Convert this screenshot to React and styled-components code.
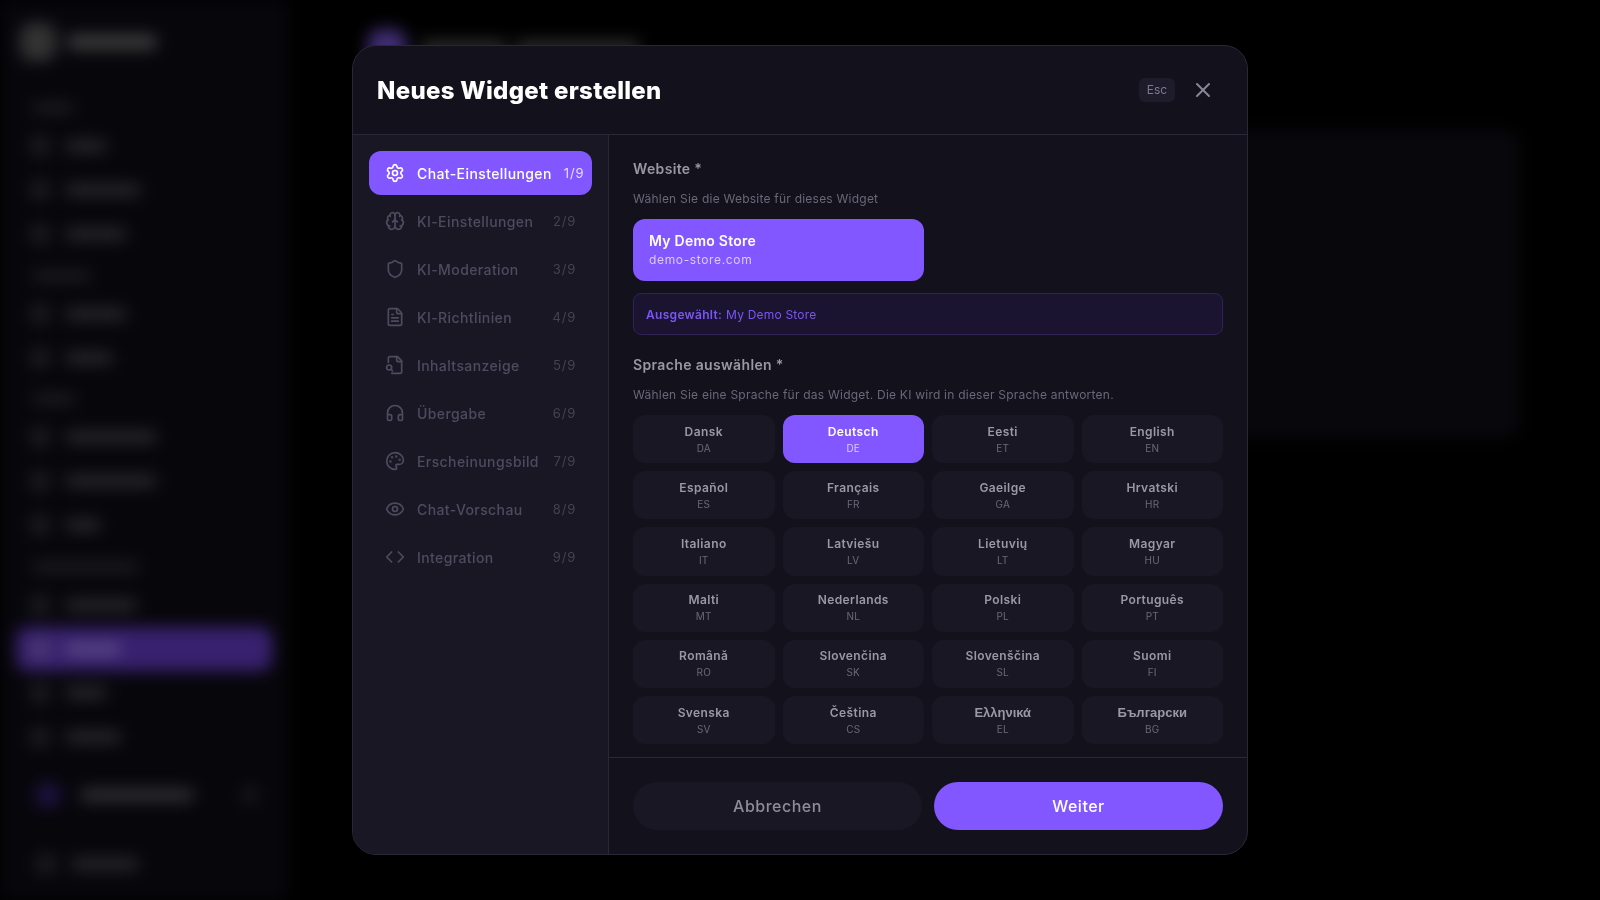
import { Settings, Brain, Shield, FileText, Headphones, Palette, Eye, Code, X } from "lucide-react";
import styled, { createGlobalStyle } from "styled-components";

const GlobalStyle = createGlobalStyle`
  * {
    box-sizing: border-box;
  }
  html,
  body {
    margin: 0;
    height: 100%;
    background: #000;
    font-family: "Inter", "Noto Sans", sans-serif;
    overflow: hidden;
  }
`;

/* blurred page behind the dialog */
const Backdrop = styled.div`
  display: flex;
  height: 100vh;
  background: #000;
  filter: blur(8px);
`;

const SideBar = styled.aside`
  width: 288px;
  flex-shrink: 0;
  padding: 22px 16px;
  background: #07060b;
`;

const Logo = styled.div`
  display: flex;
  align-items: center;
  gap: 12px;
  height: 40px;
  margin: 0 0 41px 4px;
`;

const LogoMark = styled.div`
  width: 36px;
  height: 38px;
  border-radius: 12px;
  background: #333;
`;

const LogoText = styled.div`
  width: 88px;
  height: 14px;
  background: #404040;
`;

const Group = styled.div`
  margin-bottom: 14.5px;
`;

const GroupLabel = styled.div`
  width: ${(p) => p.$w}px;
  height: 10px;
  margin: 2px 0 11px 17px;
  background: #1f1f22;
`;

const SideRow = styled.div`
  display: flex;
  align-items: center;
  gap: 16px;
  height: 44px;
  padding-left: 14px;
  border-radius: 12px;
  background: ${(p) => (p.$active ? "#38216f" : "transparent")};
`;

const SideIcon = styled.div`
  width: 20px;
  height: 20px;
  border-radius: 6px;
  background: ${(p) => (p.$active ? "#4a3a72" : "#1c1c1f")};
`;

const SideText = styled.div`
  width: ${(p) => p.$w}px;
  height: 12px;
  background: ${(p) => (p.$active ? "#5a4a85" : "#29292c")};
`;

const Profile = styled.div`
  display: flex;
  align-items: center;
  height: 44px;
  margin-top: 14px;
  padding-left: 19px;
`;

const Avatar = styled.div`
  width: 26px;
  height: 26px;
  border-radius: 50%;
  background: #1d1240;
`;

const ProfileText = styled.div`
  width: 112px;
  height: 12px;
  margin-left: 20px;
  background: #333336;
`;

const ProfileChevron = styled.div`
  width: 14px;
  height: 14px;
  margin-left: 50px;
  background: #1c1c1f;
`;

const LogoutRow = styled(SideRow)`
  margin-top: 25px;
  padding-left: 20px;
`;

const PageArea = styled.main`
  flex: 1;
  padding: 36px 80px 0 80px;
`;

const PageHead = styled.div`
  display: flex;
  align-items: center;
  height: 24px;
  margin-bottom: 70px;
`;

const PageIcon = styled.div`
  width: 38px;
  height: 38px;
  margin-right: 15px;
  border-radius: 12px;
  background: #3f2d72;
`;

const PageTitle = styled.div`
  width: ${(p) => p.$w}px;
  height: 14px;
  margin-right: 10px;
  background: #303030;
`;

const PageCard = styled.div`
  height: 308px;
  border-radius: 16px;
  background: #08080c;
`;

/* dialog */
const Overlay = styled.div`
  position: fixed;
  inset: 0;
  display: flex;
  align-items: center;
  justify-content: center;
`;

const Dialog = styled.div`
  display: flex;
  flex-direction: column;
  width: 896px;
  height: 90vh;
  overflow: hidden;
  background: #13111c;
  border: 1px solid #2a2738;
  border-radius: 24px;
`;

const Header = styled.header`
  display: flex;
  align-items: center;
  justify-content: space-between;
  flex-shrink: 0;
  height: 89px;
  padding: 0 24px;
  border-bottom: 1px solid #2a2738;
`;

const Title = styled.h2`
  margin: 0;
  font-size: 24px;
  font-weight: 800;
  letter-spacing: 0.3px;
  color: #fff;
`;

const HeaderActions = styled.div`
  display: flex;
  align-items: center;
  gap: 8px;
`;

const EscKey = styled.kbd`
  width: 36px;
  height: 24px;
  font-family: inherit;
  font-size: 12px;
  line-height: 24px;
  text-align: center;
  color: #7e7a8c;
  background: #1e1b2b;
  border-radius: 6px;
`;

const CloseButton = styled.button`
  display: flex;
  padding: 8px;
  border: 0;
  color: #8a8698;
  background: none;
`;

const Body = styled.div`
  display: flex;
  flex: 1;
  min-height: 0;
`;

const Steps = styled.nav`
  display: flex;
  flex-direction: column;
  gap: 4px;
  flex-shrink: 0;
  width: 256px;
  padding: 16px;
  background: #1a1725;
  border-right: 1px solid #2a2738;
`;

const Step = styled.div`
  display: flex;
  align-items: center;
  gap: 12px;
  height: 44px;
  padding: 0 16px;
  font-size: 14px;
  font-weight: 500;
  letter-spacing: 0.4px;
  white-space: nowrap;
  color: ${(p) => (p.$active ? "#fff" : "#4f4b5e")};
  background: ${(p) => (p.$active ? "#8257ff" : "transparent")};
  border-radius: 12px;

  svg {
    flex-shrink: 0;
  }
`;

const StepLabel = styled.span`
  flex: 1 0 auto;
`;

const StepCount = styled.span`
  flex-shrink: 0;
  font-size: 13px;
  font-weight: 400;
  letter-spacing: 0.8px;
  opacity: 0.8;
`;

const Main = styled.div`
  display: flex;
  flex-direction: column;
  flex: 1;
  min-width: 0;
`;

const Scroll = styled.div`
  flex: 1;
  min-height: 0;
  overflow: hidden;
  padding: 24px 24px 12px;
`;

const FieldLabel = styled.div`
  font-size: 14px;
  line-height: 20px;
  font-weight: 600;
  letter-spacing: 0.35px;
  color: #9b98a5;
`;

const Hint = styled.div`
  margin: 12px 0 12px;
  font-size: 12px;
  line-height: 16px;
  letter-spacing: 0.23px;
  color: #6b6778;
`;

const SiteGrid = styled.div`
  display: grid;
  grid-template-columns: 1fr 1fr;
  gap: 8px;
`;

const SiteCard = styled.div`
  height: 62px;
  padding: 12px 16px;
  background: #8257ff;
  border-radius: 12px;
`;

const SiteName = styled.div`
  font-size: 14px;
  line-height: 20px;
  font-weight: 600;
  letter-spacing: 0.25px;
  color: #fff;
`;

const SiteUrl = styled.div`
  font-size: 12px;
  line-height: 18px;
  letter-spacing: 0.65px;
  color: #d9ccff;
`;

const Selected = styled.div`
  display: flex;
  align-items: center;
  gap: 4px;
  height: 42px;
  margin: 12px 0 20px;
  padding: 0 12px;
  font-size: 12px;
  letter-spacing: 0.2px;
  color: #7c55f5;
  background: #1a1430;
  border: 1px solid #2f2355;
  border-radius: 8px;

  b {
    font-weight: 600;
    letter-spacing: 0.3px;
  }
`;

const LangGrid = styled.div`
  display: grid;
  grid-template-columns: repeat(4, 1fr);
  gap: 8px;
`;

const Lang = styled.div`
  display: flex;
  flex-direction: column;
  align-items: center;
  justify-content: center;
  height: 48.2px;
  background: ${(p) => (p.$active ? "#8257ff" : "#1a1725")};
  border-radius: 12px;
`;

const LangName = styled.div`
  font-family: ${(p) => (p.$fallback ? '"Liberation Sans", sans-serif' : "inherit")};
  font-size: ${(p) => (p.$fallback ? "13px" : "12px")};
  line-height: 16px;
  font-weight: 600;
  letter-spacing: ${(p) => (p.$fallback ? "0" : "0.4px")};
  color: ${(p) => (p.$active ? "#fff" : "#9b98a5")};
`;

const LangCode = styled.div`
  margin-top: 1px;
  font-size: 10px;
  line-height: 14px;
  letter-spacing: 0.2px;
  color: ${(p) => (p.$active ? "#d9ccff" : "#6b6778")};
`;

const Footer = styled.footer`
  display: grid;
  grid-template-columns: 1fr 1fr;
  gap: 12px;
  flex-shrink: 0;
  padding: 24px;
  border-top: 1px solid #2a2738;
`;

const FooterButton = styled.button`
  height: 48px;
  border: 0;
  border-radius: 24px;
  font-family: inherit;
  font-size: 16px;
  font-weight: 500;
  letter-spacing: 0.5px;
  color: ${(p) => (p.$primary ? "#fff" : "#8f8c9a")};
  background: ${(p) => (p.$primary ? "#8257ff" : "#1a1725")};
`;

// lucide's file-search no longer has the glass on the left edge, so it is drawn here
const FileGlass = ({ size }) => (
  <svg
    width={size}
    height={size}
    viewBox="0 0 24 24"
    fill="none"
    stroke="currentColor"
    strokeWidth="2"
    strokeLinecap="round"
    strokeLinejoin="round"
  >
    <path d="M8 22h10a2 2 0 0 0 2-2V7l-5-5H6a2 2 0 0 0-2 2v5" />
    <path d="M14 2v4a2 2 0 0 0 2 2h4" />
    <circle cx="5" cy="15" r="3" />
    <path d="m9 19-1.8-1.8" />
  </svg>
);

const sideGroups = [
  { w: 40, items: [{ w: 40 }, { w: 74 }, { w: 60 }] },
  { w: 57, items: [{ w: 60 }, { w: 46 }] },
  { w: 42, items: [{ w: 90 }, { w: 90 }, { w: 34 }] },
  {
    w: 105,
    items: [{ w: 70 }, { w: 54, active: true }, { w: 40 }, { w: 54 }],
  },
];

const steps = [
  { label: "Chat-Einstellungen", icon: Settings },
  { label: "KI-Einstellungen", icon: Brain },
  { label: "KI-Moderation", icon: Shield },
  { label: "KI-Richtlinien", icon: FileText },
  { label: "Inhaltsanzeige", icon: FileGlass },
  { label: "Übergabe", icon: Headphones },
  { label: "Erscheinungsbild", icon: Palette },
  { label: "Chat-Vorschau", icon: Eye },
  { label: "Integration", icon: Code },
];

const languages = [
  ["Dansk", "DA"],
  ["Deutsch", "DE"],
  ["Eesti", "ET"],
  ["English", "EN"],
  ["Español", "ES"],
  ["Français", "FR"],
  ["Gaeilge", "GA"],
  ["Hrvatski", "HR"],
  ["Italiano", "IT"],
  ["Latviešu", "LV"],
  ["Lietuvių", "LT"],
  ["Magyar", "HU"],
  ["Malti", "MT"],
  ["Nederlands", "NL"],
  ["Polski", "PL"],
  ["Português", "PT"],
  ["Română", "RO"],
  ["Slovenčina", "SK"],
  ["Slovenščina", "SL"],
  ["Suomi", "FI"],
  ["Svenska", "SV"],
  ["Čeština", "CS"],
  ["Ελληνικά", "EL"],
  ["Български", "BG"],
];

const App = () => {
  return (
    <>
      <GlobalStyle />
      <Backdrop>
        <SideBar>
          <Logo>
            <LogoMark />
            <LogoText />
          </Logo>
          {sideGroups.map((group, i) => (
            <Group key={i}>
              <GroupLabel $w={group.w} />
              {group.items.map((item, j) => (
                <SideRow key={j} $active={item.active}>
                  <SideIcon $active={item.active} />
                  <SideText $w={item.w} $active={item.active} />
                </SideRow>
              ))}
            </Group>
          ))}
          <Profile>
            <Avatar />
            <ProfileText />
            <ProfileChevron />
          </Profile>
          <LogoutRow>
            <SideIcon />
            <SideText $w={66} />
          </LogoutRow>
        </SideBar>
        <PageArea>
          <PageHead>
            <PageIcon />
            <PageTitle $w={85} />
            <PageTitle $w={123} />
          </PageHead>
          <PageCard />
        </PageArea>
      </Backdrop>

      <Overlay>
        <Dialog>
          <Header>
            <Title>Neues Widget erstellen</Title>
            <HeaderActions>
              <EscKey>Esc</EscKey>
              <CloseButton>
                <X size={24} />
              </CloseButton>
            </HeaderActions>
          </Header>
          <Body>
            <Steps>
              {steps.map((step, i) => (
                <Step key={step.label} $active={i === 0}>
                  <step.icon size={20} />
                  <StepLabel>{step.label}</StepLabel>
                  <StepCount>{i + 1}/9</StepCount>
                </Step>
              ))}
            </Steps>
            <Main>
              <Scroll>
                <FieldLabel>Website *</FieldLabel>
                <Hint>Wählen Sie die Website für dieses Widget</Hint>
                <SiteGrid>
                  <SiteCard>
                    <SiteName>My Demo Store</SiteName>
                    <SiteUrl>demo-store.com</SiteUrl>
                  </SiteCard>
                </SiteGrid>
                <Selected>
                  <b>Ausgewählt:</b> My Demo Store
                </Selected>
                <FieldLabel>Sprache auswählen *</FieldLabel>
                <Hint>Wählen Sie eine Sprache für das Widget. Die KI wird in dieser Sprache antworten.</Hint>
                <LangGrid>
                  {languages.map(([name, code]) => (
                    <Lang key={code} $active={code === "DE"}>
                      <LangName $active={code === "DE"} $fallback={code === "EL" || code === "BG"}>
                        {name}
                      </LangName>
                      <LangCode $active={code === "DE"}>{code}</LangCode>
                    </Lang>
                  ))}
                </LangGrid>
              </Scroll>
              <Footer>
                <FooterButton>Abbrechen</FooterButton>
                <FooterButton $primary>Weiter</FooterButton>
              </Footer>
            </Main>
          </Body>
        </Dialog>
      </Overlay>
    </>
  );
};

export default App;
